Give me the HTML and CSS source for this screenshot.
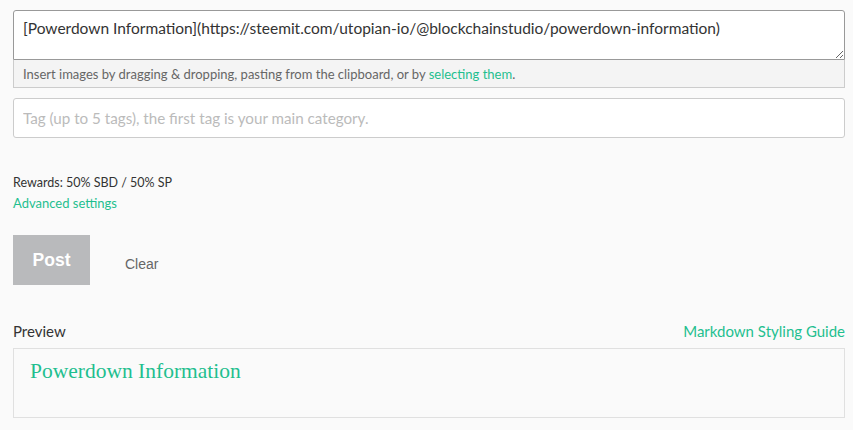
FILE: index.html
```html
<!DOCTYPE html>
<html lang="en">
<head>
  <meta charset="UTF-8">
  <title>Submit a Story</title>
  <link rel="stylesheet" href="styles.css">
</head>
<body>
  <div class="editor">
    <div class="body-field">
      <textarea class="body-input">[Powerdown Information](https://steemit.com/utopian-io/@blockchainstudio/powerdown-information)</textarea>
      <p class="drop-hint">Insert images by dragging &amp; dropping, pasting from the clipboard, or by <a href="#">selecting them</a>.</p>
    </div>

    <input class="tag-input" type="text" placeholder="Tag (up to 5 tags), the first tag is your main category.">

    <div class="rewards">
      <div>Rewards: 50% SBD / 50% SP</div>
      <a href="#">Advanced settings</a>
    </div>

    <div class="actions">
      <button class="post-btn" disabled>Post</button>
      <button class="clear-btn">Clear</button>
    </div>

    <div class="preview-head">
      <span class="preview-label">Preview</span>
      <a href="#" class="guide-link">Markdown Styling Guide</a>
    </div>
    <div class="preview">
      <a href="#" class="preview-link">Powerdown Information</a>
    </div>
  </div>
</body>
</html>
```

FILE: styles.css
```css
body {
  margin: 0;
  background-color: #fafafa;
  font-family: Lato, "Liberation Sans", sans-serif;
  color: #333;
}
a {
  color: #1fbf8f;
  text-decoration: none;
}
.editor {
  padding: 10px 8px 0 13px;
}
.body-input {
  display: block;
  box-sizing: border-box;
  width: 100%;
  height: 50px;
  margin: 0;
  padding: 7px 9px;
  border: 1px solid #999;
  border-radius: 3px 3px 0 0;
  background-color: #fff;
  font-family: inherit;
  font-size: 15.5px;
  line-height: 20px;
  color: #333;
  resize: vertical;
}
.drop-hint {
  margin: 0;
  height: 28px;
  box-sizing: border-box;
  padding: 5px 9px;
  border: 1px solid #ccc;
  border-top: none;
  background-color: #f4f4f4;
  font-size: 13px;
  line-height: 18px;
  color: #666;
}
.tag-input {
  display: block;
  box-sizing: border-box;
  width: 100%;
  height: 40px;
  margin: 10px 0 0;
  padding: 0 9px;
  border: 1px solid #ccc;
  border-radius: 3px;
  background-color: #fff;
  font-family: inherit;
  font-size: 15.2px;
}
.tag-input::placeholder {
  color: #bbb;
}
.rewards {
  margin-top: 35px;
  font-size: 12.5px;
  line-height: 20px;
}
.rewards a {
  display: inline-block;
  font-size: 13px;
}
.actions {
  display: flex;
  align-items: center;
  margin-top: 21px;
}
.post-btn {
  width: 77px;
  height: 50px;
  border: none;
  background-color: #b9babc;
  color: #fff;
  font-family: "Liberation Sans", Arial, sans-serif;
  font-weight: bold;
  font-size: 17.5px;
}
.clear-btn {
  margin-left: 26px;
  margin-top: 8px;
  padding: 0 9px;
  border: none;
  background: none;
  color: #666;
  font-family: "Liberation Sans", Arial, sans-serif;
  font-size: 14px;
}
.preview-head {
  display: flex;
  justify-content: space-between;
  align-items: flex-end;
  margin-top: 36px;
  font-size: 15px;
  line-height: 20px;
}
.guide-link {
  font-size: 15px;
}
.preview {
  margin-top: 7px;
  height: 70px;
  box-sizing: border-box;
  padding: 10px 16px;
  border: 1px solid #e0e0e0;
}
.preview-link {
  font-family: "Liberation Serif", serif;
  font-size: 21.5px;
  line-height: 24px;
}
```
